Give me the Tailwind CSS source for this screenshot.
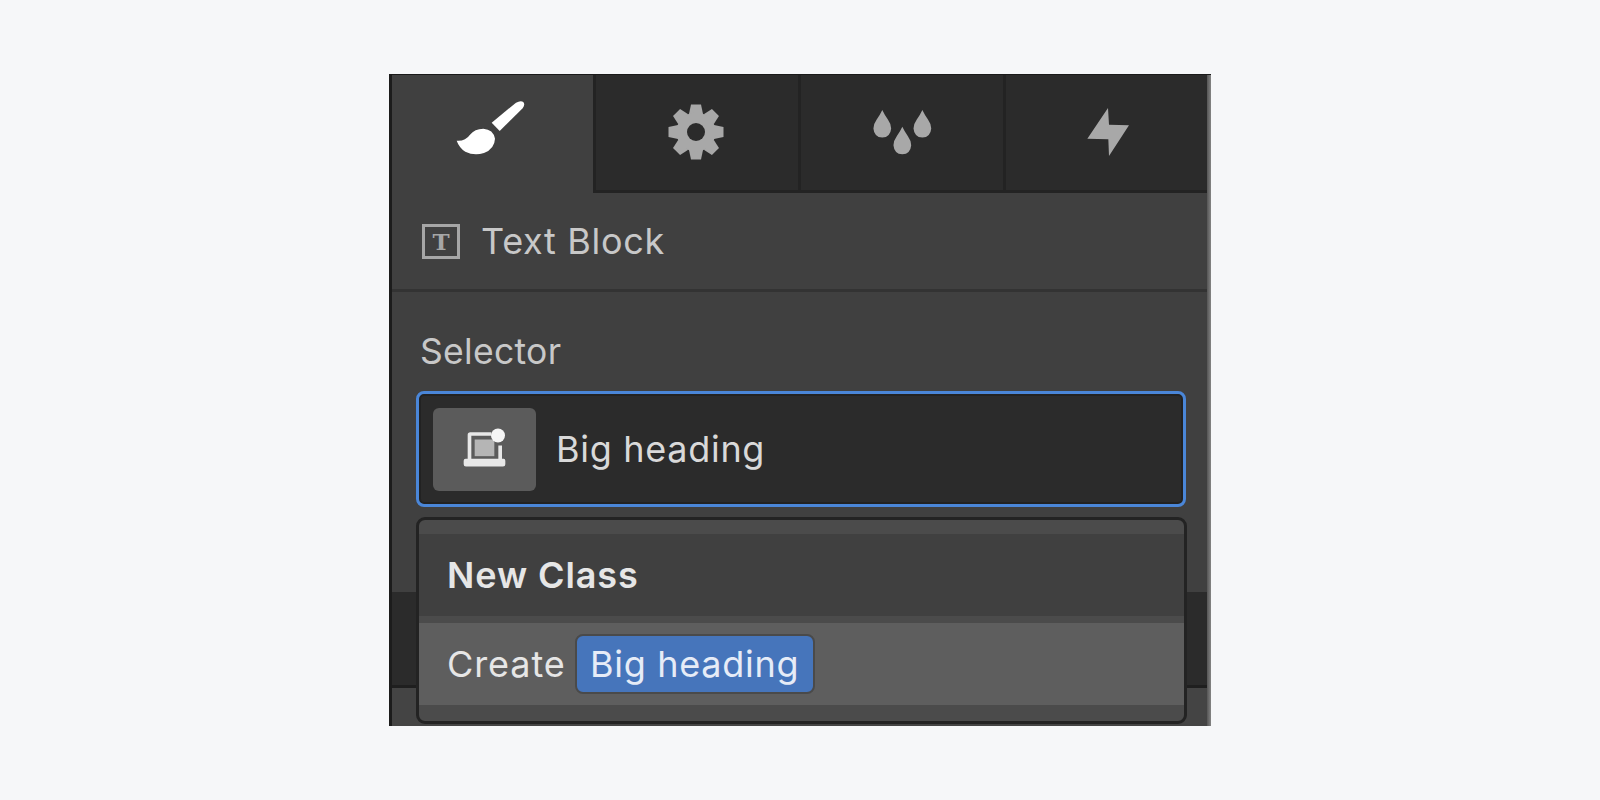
<!DOCTYPE html>
<html lang="en">
<head>
<meta charset="utf-8">
<title>Selector</title>
<script src="https://cdn.jsdelivr.net/npm/@tailwindcss/browser@4"></script>
</head>
<body class="m-0 bg-[#f6f7f9] font-['Inter','Liberation_Sans',sans-serif]">
<div class="flex h-[800px] w-[1600px] items-center justify-center">
  <div class="relative flex h-[652px] w-[822px] flex-col overflow-hidden border-t border-t-[#1a1a1a] border-l-[3px] border-l-[#1c1c1c] bg-[#404040] pr-[4px]">
    <div class="flex h-[118px] shrink-0">
      <div class="flex w-[201px] items-center justify-center bg-[#404040] pr-[5px] pb-[13px]">
        <svg class="h-[55px] w-[70px]" viewBox="225 118 210 165" fill="#fff" aria-hidden="true"><path d="M335 186 L408 126 Q422 118 430 124 Q436 132 428 143 L359 211 Z"/><path d="M230 240 Q256 242 270 222 Q284 204 310 204 Q340 206 345 234 Q344 264 312 277 Q282 286 256 273 Q238 262 230 240 Z"/></svg>
      </div>
      <div class="flex w-[205px] items-center justify-center border-b-[3px] border-l-[3px] border-[#232323] bg-[#2b2b2b] pr-[2px] pb-[1px]">
        <svg class="h-[56px] w-[56px]" viewBox="-28 -28 56 56" fill="#a8a8a8" aria-hidden="true"><path d="M-7 -18 L-5 -27.5 L5 -27.5 L7 -18 Z"/><path d="M-7 -18 L-5 -27.5 L5 -27.5 L7 -18 Z" transform="rotate(45)"/><path d="M-7 -18 L-5 -27.5 L5 -27.5 L7 -18 Z" transform="rotate(90)"/><path d="M-7 -18 L-5 -27.5 L5 -27.5 L7 -18 Z" transform="rotate(135)"/><path d="M-7 -18 L-5 -27.5 L5 -27.5 L7 -18 Z" transform="rotate(180)"/><path d="M-7 -18 L-5 -27.5 L5 -27.5 L7 -18 Z" transform="rotate(225)"/><path d="M-7 -18 L-5 -27.5 L5 -27.5 L7 -18 Z" transform="rotate(270)"/><path d="M-7 -18 L-5 -27.5 L5 -27.5 L7 -18 Z" transform="rotate(315)"/><circle r="19.5"/><circle r="9" fill="#2b2b2b"/></svg>
      </div>
      <div class="flex w-[205px] items-center justify-center border-b-[3px] border-l-[3px] border-[#232323] bg-[#2b2b2b] pb-[1px]">
        <svg class="h-[46px] w-[60px]" viewBox="215 150 180 140" fill="#a8a8a8" aria-hidden="true"><path d="M245 153 Q251 166 262 182 Q272 196 272 209 Q270 235 245 237 Q220 235 218 209 Q218 196 228 182 Q239 166 245 153 Z"/><path d="M367 153 Q373 166 384 182 Q394 196 394 209 Q392 235 367 237 Q342 235 340 209 Q340 196 350 182 Q361 166 367 153 Z"/><path d="M306 204 Q312 217 323 233 Q333 247 333 260 Q331 286 306 288 Q281 286 279 260 Q279 247 289 233 Q300 217 306 204 Z"/></svg>
      </div>
      <div class="flex flex-1 items-center justify-center border-b-[3px] border-l-[3px] border-[#232323] bg-[#2b2b2b] pb-[1px] pl-[2px]">
        <svg class="h-[48px] w-[42px]" viewBox="862 143 126 144" fill="#a8a8a8" aria-hidden="true"><path d="M925 143 L928 193 L988 195 L928 287 L926 237 L863 235 Z"/></svg>
      </div>
    </div>
    <div class="flex h-[96px] shrink-0 items-center gap-[21px] pl-[30px]">
      <span class="flex h-[35px] w-[38px] items-center justify-center border-[3px] border-[#a6a6a6] font-['DejaVu_Serif',serif] text-[23px] leading-none font-bold text-[#a6a6a6]">T</span>
      <span class="text-[36px] leading-none tracking-[0.7px] text-[#c8c8c8]">Text Block</span>
    </div>
    <div class="h-[3px] shrink-0 bg-[#333333]"></div>
    <div class="h-[300px] shrink-0 pl-[24px] pr-[21px]">
      <div class="flex h-[99px] items-center pl-[4px] pt-[20px] text-[35.5px] leading-none tracking-[0.3px] text-[#c8c8c8]">Selector</div>
      <div class="flex h-[116px] items-center rounded-[8px] border-[3px] border-[#4a86d8] bg-[#2b2b2b] pl-[14px] shadow-[inset_0_0_0_2px_#222]">
        <div class="flex h-[83px] w-[103px] items-center justify-center rounded-[6px] bg-[#5b5b5b] pb-[3px]">
          <svg class="h-[42px] w-[45px]" viewBox="125 95 135 125" aria-hidden="true"><path d="M130 196 Q130 190 136 190 L142 190 L142 118 Q142 110 150 110 L212 110 L212 121 L153 121 L153 190 L234 190 L234 150 L245 150 L245 190 L250 190 Q255 190 255 196 L255 206 Q255 213 248 213 L137 213 Q130 213 130 206 Z" fill="#e8e8e8"/><rect x="163" y="132" width="59" height="50" fill="#b5b5b5"/><circle cx="233" cy="120" r="21" fill="#f5f5f5"/></svg>
        </div>
        <span class="ml-[20px] text-[36px] leading-none tracking-[0.7px] text-[#d9d9d9]">Big heading</span>
      </div>
    </div>
    <div class="h-[93px] shrink-0 bg-[#2b2b2b]"></div>
    <div class="h-[3px] shrink-0 bg-[#1f1f1f]"></div>
    <div class="flex-1 bg-[#444444]"></div>
    <div class="absolute top-0 right-0 bottom-0 w-[4px] bg-linear-to-r from-[#555555] to-[#858585]"></div>
    <div class="absolute top-[442px] left-[24px] flex h-[207px] w-[771px] flex-col overflow-hidden rounded-[9px] border-[3px] border-[#232323] bg-[#4b4b4b]">
      <div class="h-[14px] shrink-0"></div>
      <div class="flex h-[82px] shrink-0 items-center bg-[#404040] pl-[28px] text-[36px] leading-none font-semibold tracking-[0.9px] text-[#e6e6e6]">New Class</div>
      <div class="h-[7px] shrink-0"></div>
      <div class="flex h-[82px] shrink-0 items-center bg-[#5e5e5e] pl-[28px]">
        <span class="text-[36px] leading-none tracking-[0.9px] text-[#e6e6e6]">Create</span>
        <span class="ml-[9px] flex h-[60px] w-[240px] items-center justify-center rounded-[8px] border-[2px] border-[#4a4a4a] bg-[#4675bb] text-[36px] leading-none tracking-[0.7px] text-[#e6ecf7]">Big heading</span>
      </div>
    </div>
  </div>
</div>
</body>
</html>
